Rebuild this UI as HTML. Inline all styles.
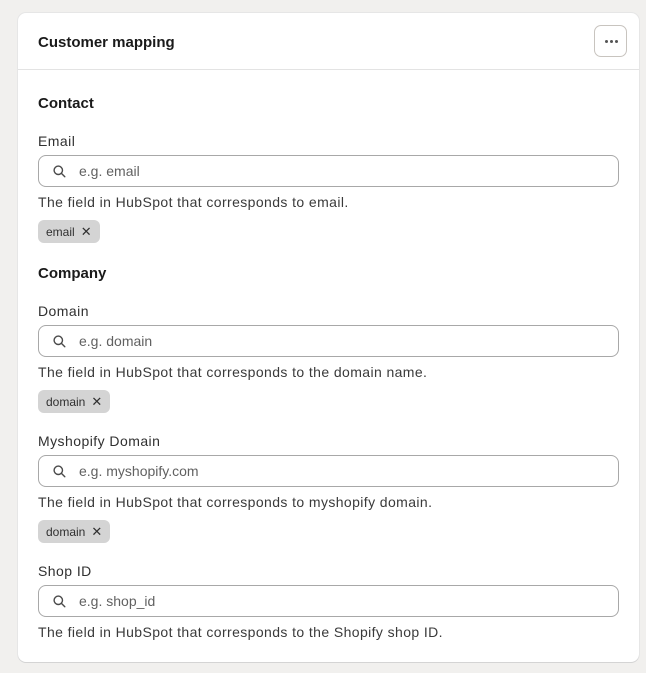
<!DOCTYPE html>
<html><head><meta charset="utf-8"><style>
*{box-sizing:border-box;margin:0;padding:0}
body{width:646px;height:673px;background:#f1f0ee;font-family:"Liberation Sans",sans-serif;color:#303030;position:relative;overflow:hidden}
.card{position:absolute;left:18px;top:13px;width:621px;height:649px;background:#fff;border-radius:8px;box-shadow:0 1px 0 #d4d4d4,0 0 0 1px #e6e6e6}
.hdr{position:absolute;left:0;top:56px;width:100%;height:1px;background:#e3e3e3}
.a{position:absolute;white-space:nowrap}
.t{left:20px;font-size:15px;font-weight:bold;color:#1a1a1a;line-height:20px}
.l{left:20px;font-size:14px;line-height:18px;color:#303030;letter-spacing:0.45px}
.h{left:20px;font-size:14px;line-height:18px;color:#3a3a3a;letter-spacing:0.4px}
.in{position:absolute;left:20px;width:581px;height:32px;border:1px solid #a8a8a8;border-radius:8px}
.in svg{position:absolute;left:14px;top:9px}
.in span{position:absolute;left:40px;top:7px;font-size:14px;color:#616161}
.tag{position:absolute;left:20px;height:23px;background:#d4d4d4;border-radius:6px;font-size:12px;line-height:23px;padding:0 8px;color:#303030}
.tag b{font-weight:normal;margin-left:6px;font-size:13px}
.btn{position:absolute;left:576px;top:12px;width:33px;height:32px;border:1px solid #c8c4bf;border-radius:7px}
.btn i{position:absolute;top:14px;width:3px;height:3px;border-radius:50%;background:#555}
</style></head><body>
<div class="card">
<div class="a t" style="top:20px">Customer mapping</div>
<div class="btn"><i style="left:10px"></i><i style="left:15px"></i><i style="left:20px"></i></div>
<div class="hdr"></div>
<div class="a t" style="top:81px">Contact</div>
<div class="a l" style="top:119px">Email</div>
<div class="in" style="top:142px"><svg width="13" height="13" viewBox="0 0 13 13"><circle cx="5.3" cy="5.3" r="4.2" fill="none" stroke="#4a4a4a" stroke-width="1.4"/><path d="M8.3 8.3 11.8 11.8" stroke="#4a4a4a" stroke-width="1.4" stroke-linecap="round"/></svg><span>e.g. email</span></div>
<div class="a h" style="top:180px">The field in HubSpot that corresponds to email.</div>
<div class="tag" style="top:207px">email<b>✕</b></div>
<div class="a t" style="top:251px">Company</div>
<div class="a l" style="top:289px">Domain</div>
<div class="in" style="top:312px"><svg width="13" height="13" viewBox="0 0 13 13"><circle cx="5.3" cy="5.3" r="4.2" fill="none" stroke="#4a4a4a" stroke-width="1.4"/><path d="M8.3 8.3 11.8 11.8" stroke="#4a4a4a" stroke-width="1.4" stroke-linecap="round"/></svg><span>e.g. domain</span></div>
<div class="a h" style="top:350px">The field in HubSpot that corresponds to the domain name.</div>
<div class="tag" style="top:377px">domain<b>✕</b></div>
<div class="a l" style="top:419px">Myshopify Domain</div>
<div class="in" style="top:442px"><svg width="13" height="13" viewBox="0 0 13 13"><circle cx="5.3" cy="5.3" r="4.2" fill="none" stroke="#4a4a4a" stroke-width="1.4"/><path d="M8.3 8.3 11.8 11.8" stroke="#4a4a4a" stroke-width="1.4" stroke-linecap="round"/></svg><span>e.g. myshopify.com</span></div>
<div class="a h" style="top:480px">The field in HubSpot that corresponds to myshopify domain.</div>
<div class="tag" style="top:507px">domain<b>✕</b></div>
<div class="a l" style="top:549px">Shop ID</div>
<div class="in" style="top:572px"><svg width="13" height="13" viewBox="0 0 13 13"><circle cx="5.3" cy="5.3" r="4.2" fill="none" stroke="#4a4a4a" stroke-width="1.4"/><path d="M8.3 8.3 11.8 11.8" stroke="#4a4a4a" stroke-width="1.4" stroke-linecap="round"/></svg><span>e.g. shop_id</span></div>
<div class="a h" style="top:610px">The field in HubSpot that corresponds to the Shopify shop ID.</div>
</div>
</body></html>
